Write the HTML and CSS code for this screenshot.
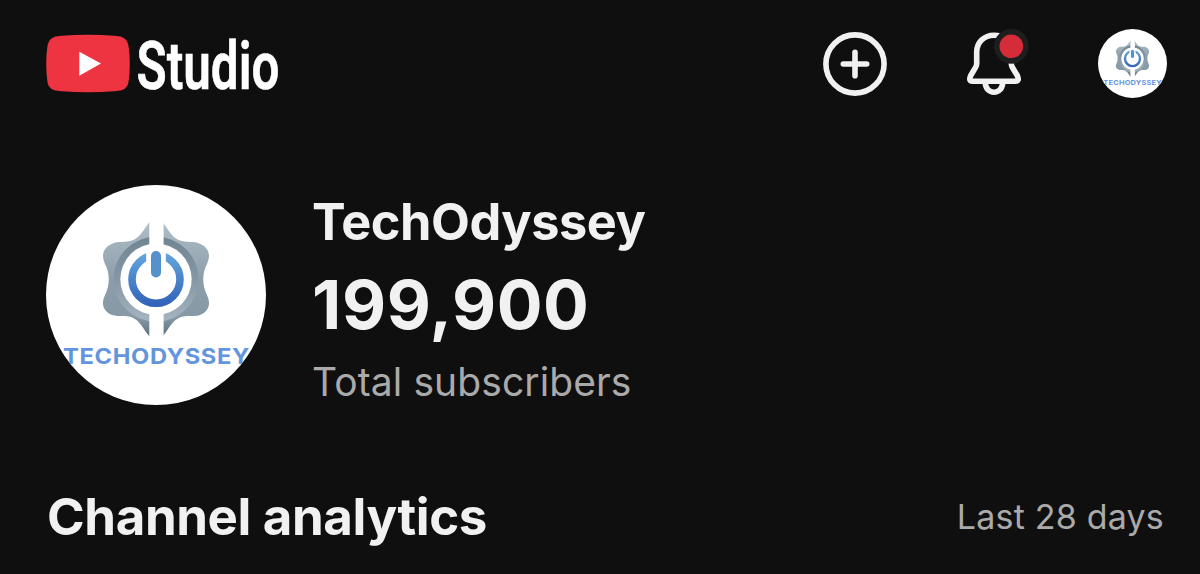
FILE: index.html
```html
<!DOCTYPE html>
<html lang="en">
<head>
  <meta charset="UTF-8">
  <meta name="viewport" content="width=device-width, initial-scale=1.0">
  <title>Studio - TechOdyssey</title>
  <link rel="stylesheet" href="styles.css">
</head>
<body>
  <header class="top-bar">
    <svg class="logo" viewBox="0 0 260 72" role="img" aria-label="Studio">
      <path fill="#ee3440" d="M13 8 Q42 5.600 71 8 Q81 8.800 82.400 17 Q85.200 36 82.400 55 Q81 62.200 71 63 Q42 65.400 13 63 Q3 62.200 1.600 55 Q-1.200 36 1.600 17 Q3 8.800 13 8Z"/>
      <path fill="#fff" d="M33.300 23.800 L55 35.600 L33.300 47.800Z"/>
      <text class="logo-text" x="90.500" y="60.800" textLength="143" lengthAdjust="spacingAndGlyphs">Studio</text>
    </svg>

    <nav class="actions">
      <svg class="icon-create" viewBox="0 0 64 64">
        <circle cx="32" cy="32" r="29.100"/>
        <path d="M32 20.300 V43.700 M20.300 32 H43.700"/>
      </svg>

      <svg class="icon-bell" viewBox="0 0 64 70">
        <path d="M28 6.300 C18 6.300 10.700 13.500 10.700 23 V34.500 Q10.700 36.500 9.700 38.200 L4.600 46.800 Q2.300 52.200 6.500 52.200 H49.500 Q53.700 52.200 51.400 46.800 L46.300 38.200 Q45.300 36.500 45.300 34.500 V23 C45.300 13.500 38 6.300 28 6.300Z"/>
        <path d="M19.300 53 C19 66.600 37 66.600 36.700 53"/>
        <circle class="dot-ring" cx="45.300" cy="17.300" r="17.400"/>
        <circle class="dot" cx="45.300" cy="17.300" r="11.800"/>
      </svg>

      <svg class="avatar avatar-small" viewBox="0 0 220 220">
        <use href="#channel-logo"/>
      </svg>
    </nav>
  </header>

  <section class="channel">
    <svg class="avatar" viewBox="0 0 220 220">
      <defs>
        <linearGradient id="gear" x1="0" y1="0" x2="0" y2="1">
          <stop offset="0" stop-color="#b3c1cb"/>
          <stop offset="0.500" stop-color="#8c9eaa"/>
          <stop offset="0.800" stop-color="#8699a5"/>
          <stop offset="1" stop-color="#4c6170"/>
        </linearGradient>
        <linearGradient id="rim" x1="0" y1="0" x2="0" y2="1">
          <stop offset="0" stop-color="#708592"/>
          <stop offset="0.500" stop-color="#8497a4"/>
          <stop offset="1" stop-color="#a5b5c1"/>
        </linearGradient>
        <linearGradient id="power" gradientUnits="userSpaceOnUse" x1="0" y1="66" x2="0" y2="122">
          <stop offset="0" stop-color="#66a9de"/>
          <stop offset="1" stop-color="#2f60b8"/>
        </linearGradient>
      </defs>
      <g id="channel-logo">
        <rect width="220" height="220" fill="#fff"/>
        <path fill="url(#gear)" d="M110 31 L103.300 37.300 C97 45 94 54 84 56 C77 58 70 55 62 61 C56 66 56 72 59 79 C64 88 64 100 59 110 C56 117 56 122 61 127 C69 134 76 129 85 132 C94 135 97 144 103.300 151.300 L110 158 L116.700 151.300 C123 144 126 135 135 132 C144 129 151 134 159 127 C164 122 164 117 161 110 C156 100 156 88 161 79 C164 72 164 66 158 61 C150 55 143 58 136 56 C126 54 123 45 116.700 37.300Z"/>
        <circle cx="110" cy="94.300" r="42.500" fill="url(#rim)"/>
        <circle cx="110" cy="94.300" r="35.700" fill="#fff"/>
        <rect x="103.300" y="28" width="14.300" height="132" fill="#fff"/>
        <circle cx="110" cy="94.300" r="24" fill="none" stroke="url(#power)" stroke-width="7.600"/>
        <rect x="100.200" y="64" width="19.600" height="16" fill="#fff"/>
        <rect x="105" y="66" width="10" height="26.500" rx="5" fill="#5592cc"/>
        <text class="brand" x="17" y="178.500" textLength="187" lengthAdjust="spacingAndGlyphs">TECHODYSSEY</text>
      </g>
    </svg>

    <div class="channel-info">
      <h1 class="channel-name">TechOdyssey</h1>
      <div class="sub-count">199,900</div>
      <div class="sub-label">Total subscribers</div>
    </div>
  </section>

  <section class="analytics">
    <h2>Channel analytics</h2>
    <span class="period">Last 28 days</span>
  </section>
</body>
</html>
```
FILE: styles.css
```css
* {
  box-sizing: border-box;
}

body {
  margin: 0;
  height: 574px;
  overflow: hidden;
  background: #0f0f0f;
  color: #f1f1f1;
  font-family: Inter, "Liberation Sans", sans-serif;
}

h1, h2 {
  margin: 0;
}

svg {
  display: block;
  flex: none;
}

.top-bar {
  display: flex;
  align-items: center;
  justify-content: space-between;
  height: 127px;
  padding: 0 33px 0 46px;
}

.logo {
  width: 260px;
  height: 72px;
  overflow: visible;
}

.logo-text {
  font-family: Roboto, sans-serif;
  font-size: 67px;
  font-weight: 600;
  fill: #fff;
  stroke: #fff;
  stroke-width: 0.6;
}

.actions {
  display: flex;
  align-items: center;
}

.icon-create,
.icon-bell {
  fill: none;
  stroke: #f1f1f1;
  stroke-width: 5.6;
  stroke-linecap: round;
  stroke-linejoin: round;
}

.icon-create {
  width: 64px;
  height: 64px;
  margin-right: 79px;
}

.icon-bell {
  width: 64px;
  height: 70px;
  margin-right: 68px;
}

.icon-bell .dot-ring {
  fill: #1e1e1e;
  stroke: none;
}

.icon-bell .dot {
  fill: #d62b38;
  stroke: none;
}

.avatar {
  width: 220px;
  height: 220px;
  border-radius: 50%;
}

.avatar-small {
  width: 69px;
  height: 69px;
}

.brand {
  font-family: Inter, sans-serif;
  font-size: 21.5px;
  font-weight: 700;
  letter-spacing: 0.6px;
  fill: #6395de;
}

.channel {
  display: flex;
  gap: 46px;
  padding: 58px 46px 0;
}

.channel-info {
  padding-top: 7px;
}

.channel-name {
  font-size: 50.5px;
  font-weight: 700;
  line-height: 60px;
  letter-spacing: -0.5px;
}

.sub-count {
  margin-top: 11px;
  font-size: 68px;
  font-weight: 700;
  line-height: 82px;
  letter-spacing: 0.6px;
}

.sub-label {
  margin-top: 14px;
  font-size: 39px;
  line-height: 46px;
  letter-spacing: 0.1px;
  color: #aaa;
}

.analytics {
  display: flex;
  align-items: center;
  justify-content: space-between;
  padding: 81px 36px 0 47px;
}

.analytics h2 {
  font-size: 51px;
  font-weight: 700;
  line-height: 62px;
  letter-spacing: -0.4px;
}

.period {
  font-size: 34px;
  line-height: 62px;
  letter-spacing: 0.2px;
  color: #aaa;
}
```
